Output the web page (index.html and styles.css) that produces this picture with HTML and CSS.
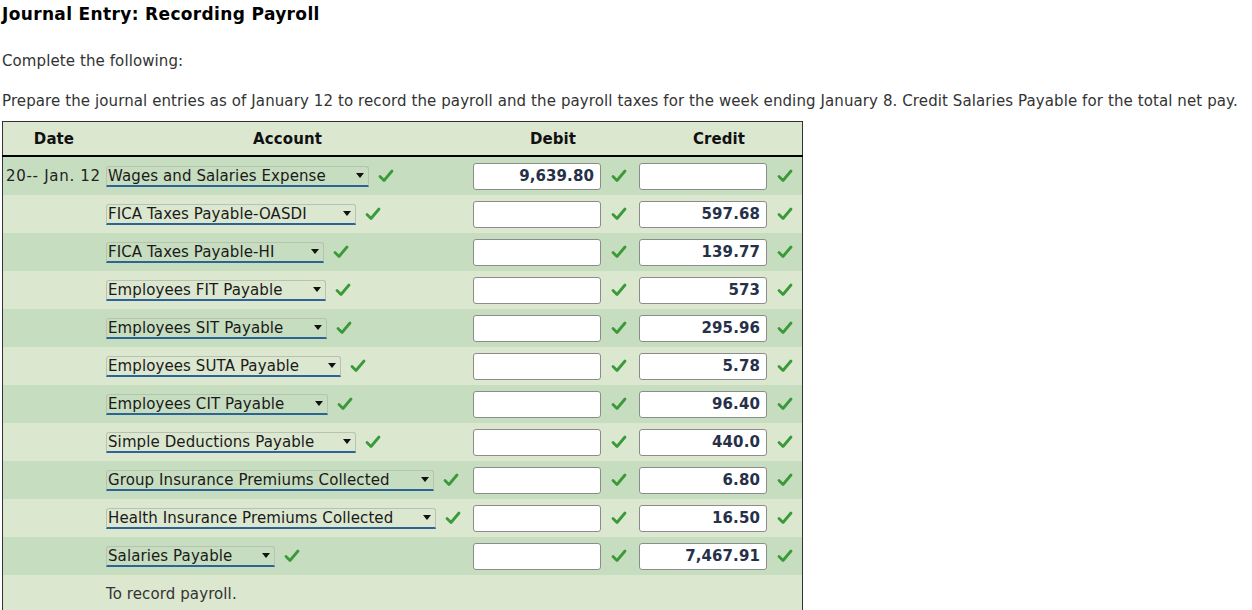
FILE: index.html
```html
<!DOCTYPE html>
<html>
<head>
<meta charset="utf-8">
<link rel="stylesheet" href="styles.css">
</head>
<body>
<h1 class="title">Journal Entry: Recording Payroll</h1>
<p class="para p1">Complete the following:</p>
<p class="para p2">Prepare the journal entries as of January 12 to record the payroll and the payroll taxes for the week ending January 8. Credit Salaries Payable for the total net pay.</p>
<table class="jt">
  <thead>
    <tr><th class="c-date">Date</th><th class="c-acct">Account</th><th class="c-num">Debit</th><th class="c-num">Credit</th></tr>
  </thead>
  <tbody>
    <tr class="dark"><td class="c-date">20-- Jan. 12</td><td class="c-acct"><span class="sel w1"><span class="st">Wages and Salaries Expense</span><span class="caret"></span></span><svg class="ck" viewBox="0 0 16 16"><path d="M2 8.5 L6 12.5 L14 3"/></svg></td><td class="c-num"><span class="inp">9,639.80</span><svg class="ck" viewBox="0 0 16 16"><path d="M2 8.5 L6 12.5 L14 3"/></svg></td><td class="c-num"><span class="inp"></span><svg class="ck" viewBox="0 0 16 16"><path d="M2 8.5 L6 12.5 L14 3"/></svg></td></tr>
    <tr class="light"><td class="c-date"></td><td class="c-acct"><span class="sel w2"><span class="st">FICA Taxes Payable-OASDI</span><span class="caret"></span></span><svg class="ck" viewBox="0 0 16 16"><path d="M2 8.5 L6 12.5 L14 3"/></svg></td><td class="c-num"><span class="inp"></span><svg class="ck" viewBox="0 0 16 16"><path d="M2 8.5 L6 12.5 L14 3"/></svg></td><td class="c-num"><span class="inp">597.68</span><svg class="ck" viewBox="0 0 16 16"><path d="M2 8.5 L6 12.5 L14 3"/></svg></td></tr>
    <tr class="dark"><td class="c-date"></td><td class="c-acct"><span class="sel w3"><span class="st">FICA Taxes Payable-HI</span><span class="caret"></span></span><svg class="ck" viewBox="0 0 16 16"><path d="M2 8.5 L6 12.5 L14 3"/></svg></td><td class="c-num"><span class="inp"></span><svg class="ck" viewBox="0 0 16 16"><path d="M2 8.5 L6 12.5 L14 3"/></svg></td><td class="c-num"><span class="inp">139.77</span><svg class="ck" viewBox="0 0 16 16"><path d="M2 8.5 L6 12.5 L14 3"/></svg></td></tr>
    <tr class="light"><td class="c-date"></td><td class="c-acct"><span class="sel w4"><span class="st">Employees FIT Payable</span><span class="caret"></span></span><svg class="ck" viewBox="0 0 16 16"><path d="M2 8.5 L6 12.5 L14 3"/></svg></td><td class="c-num"><span class="inp"></span><svg class="ck" viewBox="0 0 16 16"><path d="M2 8.5 L6 12.5 L14 3"/></svg></td><td class="c-num"><span class="inp">573</span><svg class="ck" viewBox="0 0 16 16"><path d="M2 8.5 L6 12.5 L14 3"/></svg></td></tr>
    <tr class="dark"><td class="c-date"></td><td class="c-acct"><span class="sel w5"><span class="st">Employees SIT Payable</span><span class="caret"></span></span><svg class="ck" viewBox="0 0 16 16"><path d="M2 8.5 L6 12.5 L14 3"/></svg></td><td class="c-num"><span class="inp"></span><svg class="ck" viewBox="0 0 16 16"><path d="M2 8.5 L6 12.5 L14 3"/></svg></td><td class="c-num"><span class="inp">295.96</span><svg class="ck" viewBox="0 0 16 16"><path d="M2 8.5 L6 12.5 L14 3"/></svg></td></tr>
    <tr class="light"><td class="c-date"></td><td class="c-acct"><span class="sel w6"><span class="st">Employees SUTA Payable</span><span class="caret"></span></span><svg class="ck" viewBox="0 0 16 16"><path d="M2 8.5 L6 12.5 L14 3"/></svg></td><td class="c-num"><span class="inp"></span><svg class="ck" viewBox="0 0 16 16"><path d="M2 8.5 L6 12.5 L14 3"/></svg></td><td class="c-num"><span class="inp">5.78</span><svg class="ck" viewBox="0 0 16 16"><path d="M2 8.5 L6 12.5 L14 3"/></svg></td></tr>
    <tr class="dark"><td class="c-date"></td><td class="c-acct"><span class="sel w7"><span class="st">Employees CIT Payable</span><span class="caret"></span></span><svg class="ck" viewBox="0 0 16 16"><path d="M2 8.5 L6 12.5 L14 3"/></svg></td><td class="c-num"><span class="inp"></span><svg class="ck" viewBox="0 0 16 16"><path d="M2 8.5 L6 12.5 L14 3"/></svg></td><td class="c-num"><span class="inp">96.40</span><svg class="ck" viewBox="0 0 16 16"><path d="M2 8.5 L6 12.5 L14 3"/></svg></td></tr>
    <tr class="light"><td class="c-date"></td><td class="c-acct"><span class="sel w8"><span class="st">Simple Deductions Payable</span><span class="caret"></span></span><svg class="ck" viewBox="0 0 16 16"><path d="M2 8.5 L6 12.5 L14 3"/></svg></td><td class="c-num"><span class="inp"></span><svg class="ck" viewBox="0 0 16 16"><path d="M2 8.5 L6 12.5 L14 3"/></svg></td><td class="c-num"><span class="inp">440.0</span><svg class="ck" viewBox="0 0 16 16"><path d="M2 8.5 L6 12.5 L14 3"/></svg></td></tr>
    <tr class="dark"><td class="c-date"></td><td class="c-acct"><span class="sel w9"><span class="st">Group Insurance Premiums Collected</span><span class="caret"></span></span><svg class="ck" viewBox="0 0 16 16"><path d="M2 8.5 L6 12.5 L14 3"/></svg></td><td class="c-num"><span class="inp"></span><svg class="ck" viewBox="0 0 16 16"><path d="M2 8.5 L6 12.5 L14 3"/></svg></td><td class="c-num"><span class="inp">6.80</span><svg class="ck" viewBox="0 0 16 16"><path d="M2 8.5 L6 12.5 L14 3"/></svg></td></tr>
    <tr class="light"><td class="c-date"></td><td class="c-acct"><span class="sel w10"><span class="st">Health Insurance Premiums Collected</span><span class="caret"></span></span><svg class="ck" viewBox="0 0 16 16"><path d="M2 8.5 L6 12.5 L14 3"/></svg></td><td class="c-num"><span class="inp"></span><svg class="ck" viewBox="0 0 16 16"><path d="M2 8.5 L6 12.5 L14 3"/></svg></td><td class="c-num"><span class="inp">16.50</span><svg class="ck" viewBox="0 0 16 16"><path d="M2 8.5 L6 12.5 L14 3"/></svg></td></tr>
    <tr class="dark"><td class="c-date"></td><td class="c-acct"><span class="sel w11"><span class="st">Salaries Payable</span><span class="caret"></span></span><svg class="ck" viewBox="0 0 16 16"><path d="M2 8.5 L6 12.5 L14 3"/></svg></td><td class="c-num"><span class="inp"></span><svg class="ck" viewBox="0 0 16 16"><path d="M2 8.5 L6 12.5 L14 3"/></svg></td><td class="c-num"><span class="inp">7,467.91</span><svg class="ck" viewBox="0 0 16 16"><path d="M2 8.5 L6 12.5 L14 3"/></svg></td></tr>
    <tr class="light"><td class="c-date"></td><td class="c-acct note">To record payroll.</td><td class="c-num"></td><td class="c-num"></td></tr>
  </tbody>
</table>
</body>
</html>
```
FILE: styles.css
```css
html, body {
  margin: 0;
  padding: 0;
  background: #ffffff;
}
body {
  padding: 0 2px;
  font-family: "DejaVu Sans", Verdana, sans-serif;
  font-size: 15px;
  letter-spacing: 0.1px;
  color: #222;
}
.title {
  margin: 0;
  padding-top: 3px;
  font-size: 17px;
  letter-spacing: 0.35px;
  font-weight: bold;
  line-height: 22px;
  color: #000;
}
.para {
  margin: 0;
  line-height: 18px;
  color: #333;
}
.p1 { margin-top: 27px; }
.p2 { margin-top: 22px; }
.jt {
  margin-top: 11px;
  border-collapse: collapse;
  border: 1px solid #333;
  width: 800px;
  table-layout: fixed;
}
.jt th {
  height: 33px;
  padding: 0;
  background: #dce7d0;
  border-bottom: 2px solid #000;
  font-size: 15px;
  font-weight: bold;
  color: #111;
  text-align: center;
}
.jt th.c-date { width: 102px; }
.jt th.c-acct { width: 365px; }
.jt th.c-num { width: 166px; }
.jt td {
  height: 38px;
  padding: 0;
  vertical-align: middle;
  white-space: nowrap;
}
.dark td { background: #c7ddc0; }
.light td { background: #dce7d0; }
.jt td.c-date { padding-left: 3px; color: #222; letter-spacing: 0.7px; }
.jt td.c-acct { padding-left: 1px; }
.jt td.c-num { padding-left: 3px; }
.note { color: #333; }
.sel {
  display: inline-flex;
  align-items: center;
  justify-content: space-between;
  box-sizing: border-box;
  height: 21px;
  padding: 0 4px 0 1px;
  background: transparent;
  border: 1px solid #b8c2b2;
  border-bottom: 2px solid #2c6496;
  border-radius: 3px 3px 0 0;
  vertical-align: middle;
  color: #1a1a1a;
}
.st { line-height: 18px; }
.caret {
  width: 0;
  height: 0;
  border-left: 4px solid transparent;
  border-right: 4px solid transparent;
  border-top: 5px solid #111;
}
.w1 { width: 263px; }
.w2 { width: 250px; }
.w3 { width: 218px; }
.w4 { width: 220px; }
.w5 { width: 221px; }
.w6 { width: 235px; }
.w7 { width: 222px; }
.w8 { width: 250px; }
.w9 { width: 328px; }
.w10 { width: 330px; }
.w11 { width: 169px; }
.ck {
  width: 16px;
  height: 16px;
  vertical-align: middle;
  margin-left: 9px;
  fill: none;
  stroke: #3a9a3a;
  stroke-width: 2.8;
  stroke-linecap: round;
  stroke-linejoin: round;
}
.c-num .ck { margin-left: 10px; }
.inp {
  display: inline-block;
  box-sizing: border-box;
  width: 128px;
  height: 27px;
  line-height: 25px;
  padding-right: 6px;
  background: #fff;
  border: 1px solid #8c8c8c;
  border-radius: 3px;
  text-align: right;
  font-weight: bold;
  font-size: 15px;
  color: #263048;
  vertical-align: middle;
}
```
